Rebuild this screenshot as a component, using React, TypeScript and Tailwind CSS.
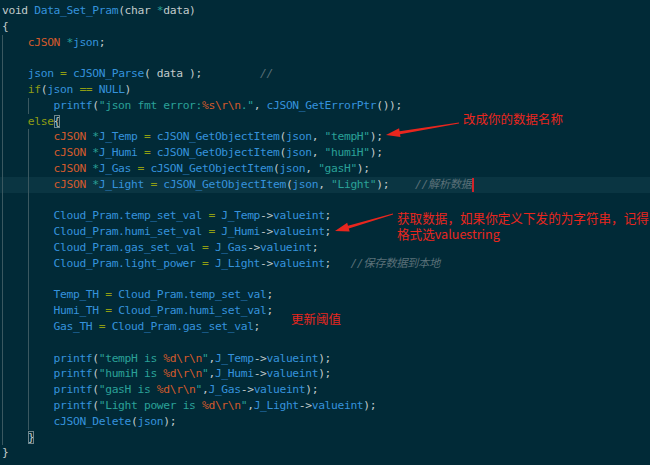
import React from "react";

type Tok = [string, string];
type Line = { indent: number; toks: Tok[]; active?: boolean; cursor?: boolean };

const COLORS: Record<string, string> = {
  p: "text-[#c2cbcb]",
  f: "text-[#3592dc]",
  t: "text-[#d45a2c]",
  o: "text-[#8f9d14]",
  k: "text-[#8f9d14]",
  s: "text-[#2aa198]",
  e: "text-[#d45a2c]",
  c: "text-[#5a7078] italic",
  m: "text-[#2aa198]",
  b: "text-[#c2cbcb] outline outline-1 outline-[#6f858b] -outline-offset-1",
};

const getItem = (name: string, key: string, pad: string): Tok[] => [
  ["t", "cJSON "],
  ["m", "*"],
  ["f", name + " "],
  ["o", "= "],
  ["f", "cJSON_GetObjectItem"],
  ["p", "("],
  ["f", "json"],
  ["p", ", "],
  ["s", `"${key}"`],
  ["p", ");" + pad],
];

const setVal = (field: string, src: string): Tok[] => [
  ["f", `Cloud_Pram.${field} `],
  ["o", "= "],
  ["f", src],
  ["p", "->"],
  ["f", "valueint"],
  ["p", ";"],
];

const th = (name: string, field: string): Tok[] => [
  ["f", `${name} `],
  ["o", "= "],
  ["f", `Cloud_Pram.${field}`],
  ["p", ";"],
];

const pr = (label: string, src: string): Tok[] => [
  ["f", "printf"],
  ["p", "("],
  ["s", `"${label} is `],
  ["e", "%d\\r\\n"],
  ["s", '"'],
  ["p", ","],
  ["f", src],
  ["p", "->"],
  ["f", "valueint"],
  ["p", ");"],
];

const LINES: Line[] = [
  { indent: 0, toks: [["p", "void "], ["f", "Data_Set_Pram"], ["p", "(char "], ["m", "*"], ["p", "data)"]] },
  { indent: 0, toks: [["p", "{"]] },
  { indent: 1, toks: [["t", "cJSON "], ["m", "*"], ["f", "json"], ["p", ";"]] },
  { indent: 1, toks: [] },
  {
    indent: 1,
    toks: [["f", "json "], ["o", "= "], ["f", "cJSON_Parse"], ["p", "( data );         "], ["c", "//"]],
  },
  { indent: 1, toks: [["k", "if"], ["p", "("], ["f", "json "], ["o", "== "], ["f", "NULL"], ["p", ")"]] },
  {
    indent: 2,
    toks: [
      ["f", "printf"],
      ["p", "("],
      ["s", '"json fmt error:'],
      ["e", "%s\\r\\n"],
      ["s", '."'],
      ["p", ", "],
      ["f", "cJSON_GetErrorPtr"],
      ["p", "());"],
    ],
  },
  { indent: 1, toks: [["k", "else"], ["b", "{"]] },
  { indent: 2, toks: getItem("J_Temp", "tempH", "") },
  { indent: 2, toks: getItem("J_Humi", "humiH", "") },
  { indent: 2, toks: getItem("J_Gas", "gasH", "") },
  { indent: 2, toks: [...getItem("J_Light", "Light", "    "), ["c", "//解析数据"]], active: true, cursor: true },
  { indent: 2, toks: [] },
  { indent: 2, toks: setVal("temp_set_val", "J_Temp") },
  { indent: 2, toks: setVal("humi_set_val", "J_Humi") },
  { indent: 2, toks: setVal("gas_set_val", "J_Gas") },
  { indent: 2, toks: [...setVal("light_power", "J_Light"), ["p", "   "], ["c", "//保存数据到本地"]] },
  { indent: 2, toks: [] },
  { indent: 2, toks: th("Temp_TH", "temp_set_val") },
  { indent: 2, toks: th("Humi_TH", "humi_set_val") },
  { indent: 2, toks: th("Gas_TH", "gas_set_val") },
  { indent: 2, toks: [] },
  { indent: 2, toks: pr("tempH", "J_Temp") },
  { indent: 2, toks: pr("humiH", "J_Humi") },
  { indent: 2, toks: pr("gasH", "J_Gas") },
  { indent: 2, toks: pr("Light power", "J_Light") },
  { indent: 2, toks: [["f", "cJSON_Delete"], ["p", "("], ["f", "json"], ["p", ");"]] },
  { indent: 1, toks: [["b", "}"]] },
  { indent: 0, toks: [["p", "}"]] },
];

const noteFont = { fontFamily: '"Noto Sans CJK SC", "Noto Sans", sans-serif' };

export default function App() {
  return (
    <div className="relative w-[650px] h-[465px] overflow-hidden bg-[#012a37]">
      {/* Editor lines */}
      <div
        className="pt-[3px] text-[11.3px] tracking-[-0.35px] leading-[15.8px] whitespace-pre"
        style={{ fontFamily: '"DejaVu Sans Mono", "Noto Sans CJK SC", monospace' }}
      >
        {LINES.map((line, i) => (
          <div key={i} className={`flex h-[15.8px] pl-[2px] ${line.active ? "bg-[#0a3542]" : ""}`}>
            {Array.from({ length: line.indent }).map((_, j) => (
              <span key={j} className="inline-block w-[25.8px] h-full shrink-0 border-l border-[#3a5860]" />
            ))}
            <span>
              {line.toks.map(([k, txt], j) => (
                <span key={j} className={COLORS[k]}>
                  {txt}
                </span>
              ))}
              {line.cursor && <span className="inline-block w-[2px] h-[14px] align-middle bg-[#d0232a]" />}
            </span>
          </div>
        ))}
      </div>

      {/* Red annotations */}
      <svg className="absolute inset-0" width="650" height="465" viewBox="0 0 650 465">
        <polygon
          fill="#e8261e"
          points="459,122.5 399.6,131.2 399.1,128.3 386,135 400.5,137.1 400,134.2 459,123.5"
        />
        <polygon
          fill="#e8261e"
          points="392.9,213.5 348,225.7 347.2,222.8 335,231 349.7,231.4 348.8,228.5 393.1,214.5"
        />
      </svg>

      <div
        className="absolute left-[463px] top-[111px] text-[12.5px] leading-[16px] text-[#e8261e] whitespace-nowrap"
        style={noteFont}
      >
        改成你的数据名称
      </div>
      <div
        className="absolute left-[397px] top-[210px] text-[12.6px] leading-[16px] text-[#e8261e] whitespace-nowrap"
        style={noteFont}
      >
        获取数据，如果你定义下发的为字符串，记得
        <br />
        格式选valuestring
      </div>
      <div
        className="absolute left-[291px] top-[311px] text-[12.5px] leading-[16px] text-[#e8261e] whitespace-nowrap"
        style={noteFont}
      >
        更新阈值
      </div>
    </div>
  );
}
